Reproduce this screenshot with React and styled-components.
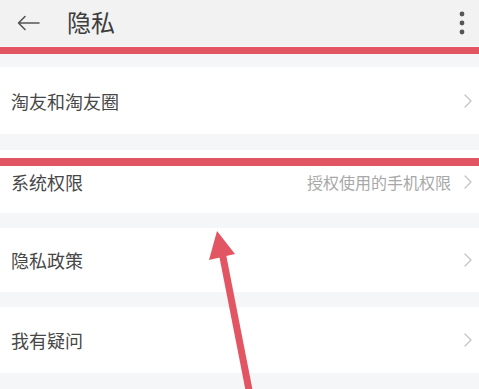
import React from "react";
import styled, { createGlobalStyle } from "styled-components";

const Global = createGlobalStyle`
  html, body { margin: 0; padding: 0; }
  body {
    background: #f5f6f8;
    font-family: "Noto Sans CJK SC", "Noto Sans", sans-serif;
    overflow: hidden;
  }
`;

const Page = styled.div`
  position: relative;
  width: 479px;
  height: 389px;
  background: #f5f6f8;
  overflow: hidden;
`;

const Header = styled.div`
  height: 46px;
  background: #f2f2f2;
  display: flex;
  align-items: center;
  padding: 0 14px 0 17px;
  box-sizing: border-box;
`;

const IconBtn = styled.div`
  display: flex;
  align-items: center;
  justify-content: center;
  color: #555;
`;

const Title = styled.div`
  margin-left: 27px;
  font-size: 24px;
  color: #3d3d3d;
  flex: 1;
  line-height: 1;
  margin-top: -2px;
`;

const List = styled.div`
  display: flex;
  flex-direction: column;
  padding-top: 21px;
`;

const Row = styled.div`
  height: ${(p) => p.$h}px;
  margin-bottom: ${(p) => p.$gap}px;
  background: #fff;
  display: flex;
  align-items: center;
  padding: 0 7px 0 11px;
  box-sizing: border-box;
`;

const Label = styled.div`
  flex: 1;
  font-size: 18px;
  color: #474747;
`;

const Hint = styled.div`
  font-size: 16px;
  color: #a8a8a8;
  margin-right: 13px;
`;

const Chevron = styled.svg`
  width: 8px;
  height: 14px;
  flex: none;
`;

const RedBar = styled.div`
  position: absolute;
  left: 0;
  right: 0;
  top: ${(p) => p.$top}px;
  height: ${(p) => p.$h}px;
  background: #e25563;
`;

const ArrowSvg = styled.svg`
  position: absolute;
  left: 0;
  top: 0;
  pointer-events: none;
`;

const rows = [
  { label: "淘友和淘友圈", h: 67, gap: 16 },
  { label: "系统权限", hint: "授权使用的手机权限", h: 63, gap: 15 },
  { label: "隐私政策", h: 64, gap: 15 },
  { label: "我有疑问", h: 66, gap: 0 },
];

export default function App() {
  return (
    <Page>
      <Global />
      <Header>
        <IconBtn>
          <svg width="23" height="16" viewBox="0 0 23 16" fill="none" stroke="#555" strokeWidth="1.6" strokeLinecap="round" strokeLinejoin="round">
            <path d="M22 8H1.5M8 1.5L1.5 8 8 14.5" />
          </svg>
        </IconBtn>
        <Title>隐私</Title>
        <IconBtn>
          <svg width="6" height="24" viewBox="0 0 6 24">
            <circle cx="3" cy="3" r="2.4" fill="#555" />
            <circle cx="3" cy="12" r="2.4" fill="#555" />
            <circle cx="3" cy="21" r="2.4" fill="#555" />
          </svg>
        </IconBtn>
      </Header>
      <List>
        {rows.map((r) => (
          <Row key={r.label} $h={r.h} $gap={r.gap}>
            <Label>{r.label}</Label>
            {r.hint && <Hint>{r.hint}</Hint>}
            <Chevron viewBox="0 0 8 14" fill="none" stroke="#c4c4c4" strokeWidth="1.3" strokeLinecap="round" strokeLinejoin="round">
              <path d="M1 1l6 6-6 6" />
            </Chevron>
          </Row>
        ))}
      </List>
      <RedBar $top={47} $h={7} />
      <RedBar $top={158} $h={8} />
      <ArrowSvg width="479" height="389" viewBox="0 0 479 389">
        <line x1="250" y1="395" x2="222" y2="252" stroke="#e25563" strokeWidth="7" />
        <polygon points="217,231 209,260 235,254" fill="#e25563" />
      </ArrowSvg>
    </Page>
  );
}
